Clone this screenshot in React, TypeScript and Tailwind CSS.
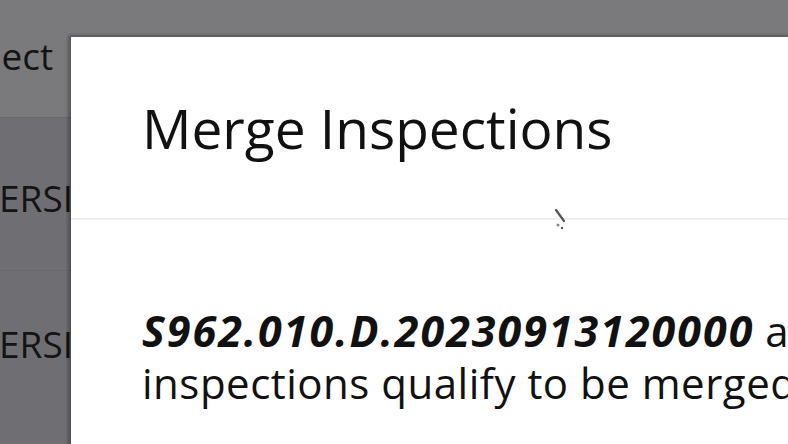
import React from "react";

export default function App() {
  return (
    <div
      className="relative w-[788px] h-[444px] overflow-hidden bg-[#6f6f73]"
      style={{ fontFamily: '"Open Sans", "Noto Sans", sans-serif' }}
    >
      {/* background page under overlay */}
      <div className="flex flex-col w-[788px] h-[444px]">
        <div className="h-[118px] bg-[#7a7a7c] border-b border-[#69696d] flex items-start pt-[37px]">
          <span className="text-[37px] leading-none text-[#141414] -ml-[49px]">Select</span>
        </div>
        <div className="h-[153px] border-b border-[#69696d] flex items-start pt-[61px]">
          <span className="text-[37px] leading-none text-[#141414] -ml-[23px]">VERSION</span>
        </div>
        <div className="flex-1 flex items-start pt-[54px]">
          <span className="text-[37px] leading-none text-[#141414] -ml-[23px]">VERSION</span>
        </div>
      </div>

      {/* modal */}
      <div className="absolute left-[71px] top-[37px] w-[760px] h-[460px] bg-white shadow-[-3px_-2px_3px_rgba(0,0,0,0.28)]">
        <div className="pl-[71px] pt-[63px] h-[181px]">
          <h1 className="text-[55px] leading-none text-[#111111] font-normal whitespace-nowrap">
            Merge Inspections
          </h1>
        </div>
        <div className="h-[2px] bg-[#efefef]" />
        <div className="pl-[71px] pt-[85px] text-[42px] leading-[52px] text-[#111111] whitespace-nowrap">
          <div>
            <span className="text-[43px] font-bold italic tracking-[2px]">S962.010.D.20230913120000</span> and
          </div>
          <div className="tracking-[0.5px]">inspections qualify to be merged</div>
        </div>
      </div>

      {/* mouse cursor remnant */}
      <svg className="absolute left-[553px] top-[208px]" width="16" height="24" viewBox="0 0 16 24">
        <path d="M3 2 L11 13" stroke="#555" strokeWidth="2.2" strokeLinecap="round" />
        <circle cx="5" cy="17" r="1.5" fill="#888" />
        <circle cx="9" cy="20" r="1.2" fill="#555" />
      </svg>
    </div>
  );
}
